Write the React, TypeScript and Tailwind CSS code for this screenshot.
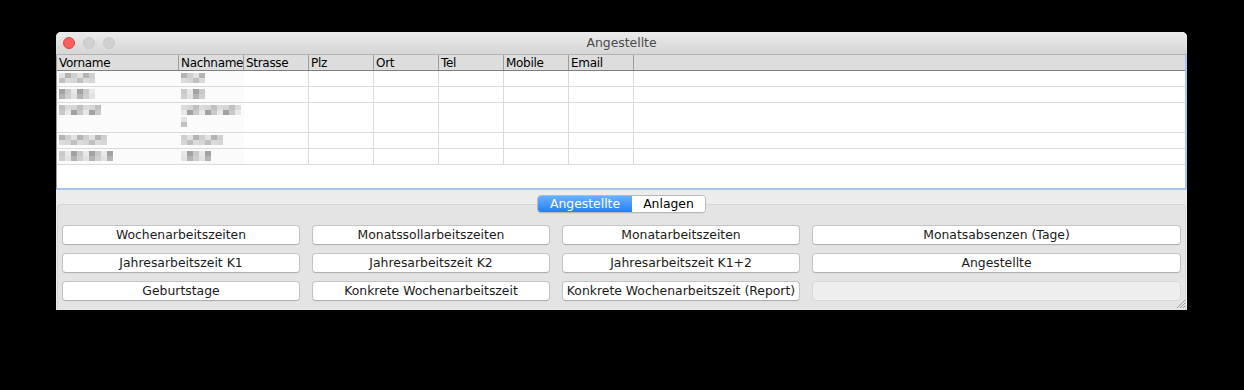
import React from 'react';

const columns = [
    { name: 'Vorname', w: 122 },
    { name: 'Nachname', w: 65 },
    { name: 'Strasse', w: 65 },
    { name: 'Plz', w: 65 },
    { name: 'Ort', w: 65 },
    { name: 'Tel', w: 65 },
    { name: 'Mobile', w: 65 },
    { name: 'Email', w: 65 },
];

const shades = ['#e2e2e2', '#c9c9c9', '#d6d6d6', '#b4b4b4', '#e8e8e8', '#c0c0c0', '#cfcfcf', '#a2a2a2', '#dbdbdb'];

// blurred (anonymised) cells: number of pixel blocks per line
const rows = [
    { h: 16, a: [6], b: [4] },
    { h: 16, a: [6], b: [4] },
    { h: 30, a: [7], b: [10, 1] },
    { h: 16, a: [8], b: [7] },
    { h: 16, a: [9], b: [5] },
];

const Pixels = ({ lines, seed }: { lines: number[]; seed: number }) => (
    <div className="flex flex-col gap-[2px] pt-[2px] pl-[2px] blur-[0.7px]">
        {lines.map((n, li) => (
            <div key={li} className="flex flex-col">
                {[0, 1].map((r) => (
                    <div key={r} className="flex">
                        {Array.from({ length: n }).map((_, i) => (
                            <div
                                key={i}
                                className="h-[5px] w-[6px]"
                                style={{ backgroundColor: shades[(i * 3 + r * 5 + seed * 7 + li) % shades.length] }}
                            />
                        ))}
                    </div>
                ))}
            </div>
        ))}
    </div>
);

const Btn = ({ label }: { label: string }) => (
    <div className="flex h-[20px] items-center justify-center rounded-[4px] border border-[#c3c3c3] border-b-[#b0b0b0] bg-white text-[12.4px] text-[#1b1b1b] shadow-[0_0.5px_0_rgba(0,0,0,0.05)]">
        {label}
    </div>
);

export default function App() {
    return (
        <div className="h-[390px] w-[1244px] bg-black pt-[32px] pl-[56px]" style={{ fontFamily: '"DejaVu Sans", "Liberation Sans", sans-serif' }}>
            <div className="flex h-[278px] w-[1131px] flex-col overflow-hidden rounded-t-[5px] bg-[#ececec]">
                {/* title bar */}
                <div className="relative flex h-[23px] items-center justify-center border-b border-[#b4b4b4] bg-gradient-to-b from-[#ebebeb] to-[#d5d5d5]">
                    <div className="absolute top-[5px] left-[7px] flex gap-[8px]">
                        <div className="h-[12px] w-[12px] rounded-full border border-[#e0443e] bg-[#fc605c]" />
                        <div className="h-[12px] w-[12px] rounded-full border border-[#c8c8c8] bg-[#d0d0d0]" />
                        <div className="h-[12px] w-[12px] rounded-full border border-[#c8c8c8] bg-[#d0d0d0]" />
                    </div>
                    <span className="text-[12.4px] text-[#4a4a4a]">Angestellte</span>
                </div>

                {/* table */}
                <div className="flex h-[135px] flex-col border-r-2 border-b-2 border-l border-r-[#a7c6ee] border-b-[#a7c6ee] border-l-[#9a9a9a] bg-white">
                    <div className="flex h-[16px] border-b border-[#7f7f7f] bg-[#dddddd]">
                        {columns.map((c) => (
                            <div key={c.name} className="flex items-center border-r border-[#9c9c9c] pl-[2px] text-[12px] leading-none tracking-[-0.3px] whitespace-nowrap text-black" style={{ width: c.w }}>
                                {c.name}
                            </div>
                        ))}
                        <div className="flex-1" />
                    </div>
                    {rows.map((r, i) => (
                        <div key={i} className="flex border-b border-[#dadada]" style={{ height: r.h }}>
                            <div className="w-[122px] bg-[#fbfbfb]">
                                <Pixels lines={r.a} seed={i} />
                            </div>
                            <div className="w-[65px] bg-[#fbfbfb]">
                                <Pixels lines={r.b} seed={i + 3} />
                            </div>
                            {columns.slice(2).map((c) => (
                                <div key={c.name} className="border-r border-[#dadada]" style={{ width: c.w }} />
                            ))}
                            <div className="flex-1" />
                        </div>
                    ))}
                    <div className="flex-1" />
                </div>

                {/* tabs + buttons */}
                <div className="relative flex flex-1 flex-col">
                    <div className="absolute top-[5px] left-0 z-10 flex w-full justify-center">
                        <div className="flex h-[18px] overflow-hidden rounded-[4px] border border-[#b9b9b9] text-[12.4px] shadow-[0_1px_0_rgba(0,0,0,0.06)]">
                            <div className="flex w-[94px] items-center justify-center bg-gradient-to-b from-[#68b0fb] to-[#1d80f9] text-white">Angestellte</div>
                            <div className="flex w-[73px] items-center justify-center bg-white text-black">Anlagen</div>
                        </div>
                    </div>
                    <div className="mt-[14px] mr-[1px] ml-[1px] flex flex-1 flex-col rounded-t-[4px] border border-b-0 border-[#d6d6d6] bg-[#e4e4e4] px-[4px] pt-[20px]">
                        <div className="grid grid-cols-[238px_238px_238px_369px] gap-x-[12px] gap-y-[8px]">
                            <Btn label="Wochenarbeitszeiten" />
                            <Btn label="Monatssollarbeitszeiten" />
                            <Btn label="Monatarbeitszeiten" />
                            <Btn label="Monatsabsenzen (Tage)" />
                            <Btn label="Jahresarbeitszeit K1" />
                            <Btn label="Jahresarbeitszeit K2" />
                            <Btn label="Jahresarbeitszeit K1+2" />
                            <Btn label="Angestellte" />
                            <Btn label="Geburtstage" />
                            <Btn label="Konkrete Wochenarbeitszeit" />
                            <Btn label="Konkrete Wochenarbeitszeit (Report)" />
                            <div className="h-[20px] rounded-[4px] border border-[#d9d9d9] bg-[#eeeeee]" />
                        </div>
                    </div>
                    <svg className="absolute right-[1px] bottom-[1px]" width="11" height="11" viewBox="0 0 11 11">
                        <path d="M10 2 L2 10 M10 5 L5 10 M10 8 L8 10" stroke="#9a9a9a" strokeWidth="1" />
                    </svg>
                </div>
            </div>
        </div>
    );
}
